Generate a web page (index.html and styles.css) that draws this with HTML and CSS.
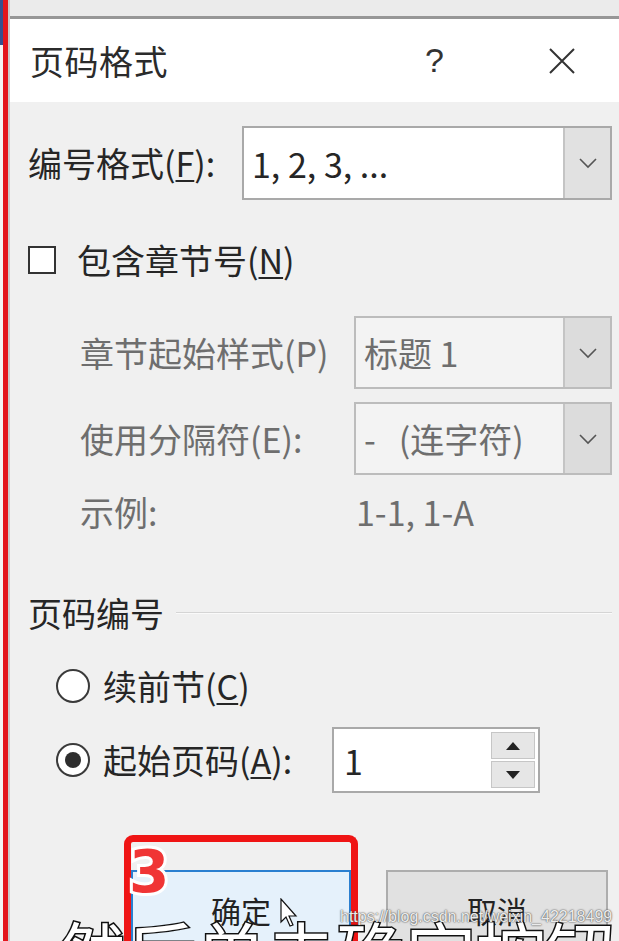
FILE: index.html
```html
<!DOCTYPE html>
<html lang="zh">
  <head>
    <meta charset="UTF-8">
    <title>页码格式</title>
    <link rel="stylesheet" href="styles.css">
  </head>
  <body>
    <div class="screen">
      <div class="edge"></div>
      <div class="marker-line"></div>
      <div class="dialog">
        <div class="top-strip"></div>
        <div class="titlebar">
          <span class="title">页码格式</span>
          <span class="help">?</span>
          <svg class="close" width="28" height="28" viewBox="0 0 28 28">
            <path d="M2 2 L26 26 M26 2 L2 26" stroke="#333" stroke-width="2" fill="none"/>
          </svg>
        </div>

        <div class="dialog-body">
          <div class="row row-format">
            <span class="label label-format">编号格式(<u>F</u>):</span>
            <div class="select select-format">
              <span class="select-value">1, 2, 3, ...</span>
              <span class="select-btn">
                <svg width="20" height="12" viewBox="0 0 20 12"><path d="M2 2 L10 10 L18 2" fill="none" stroke="#555" stroke-width="1.6"/></svg>
              </span>
            </div>
          </div>

          <div class="row row-check">
            <span class="checkbox"></span>
            <span class="label">包含章节号(<u>N</u>)</span>
          </div>

          <div class="row row-chapter">
            <span class="label label-disabled label-chapter">章节起始样式(P)</span>
            <div class="select select-disabled">
              <span class="select-value">标题 1</span>
              <span class="select-btn">
                <svg width="20" height="12" viewBox="0 0 20 12"><path d="M2 2 L10 10 L18 2" fill="none" stroke="#555" stroke-width="1.6"/></svg>
              </span>
            </div>
          </div>

          <div class="row row-sep">
            <span class="label label-disabled label-chapter">使用分隔符(E):</span>
            <div class="select select-disabled">
              <span class="select-value">-&nbsp;&nbsp; (连字符)</span>
              <span class="select-btn">
                <svg width="20" height="12" viewBox="0 0 20 12"><path d="M2 2 L10 10 L18 2" fill="none" stroke="#555" stroke-width="1.6"/></svg>
              </span>
            </div>
          </div>

          <div class="row row-sample">
            <span class="label label-disabled label-chapter">示例:</span>
            <span class="label label-disabled sample-value">1-1, 1-A</span>
          </div>

          <div class="row section-head">
            <span class="label">页码编号</span>
            <span class="section-line"></span>
          </div>

          <div class="row row-radio">
            <span class="radio"></span>
            <span class="label">续前节(<u>C</u>)</span>
          </div>

          <div class="row row-radio row-start">
            <span class="radio radio-on"></span>
            <span class="label label-start">起始页码(<u>A</u>):</span>
            <div class="spinner">
              <span class="spinner-value">1</span>
              <span class="spin-btns">
                <span class="spin-btn"><svg width="14" height="8" viewBox="0 0 14 8"><path d="M7 0 L14 8 L0 8 Z" fill="#222"/></svg></span>
                <span class="spin-btn"><svg width="14" height="8" viewBox="0 0 14 8"><path d="M0 0 L14 0 L7 8 Z" fill="#222"/></svg></span>
              </span>
            </div>
          </div>

          <div class="row row-buttons">
            <div class="annot">
              <span class="annot-num">3</span>
              <div class="btn btn-ok">确定</div>
            </div>
            <div class="btn btn-cancel">取消</div>
          </div>
        </div>
      </div>
    </div>

    <!-- video overlays -->
    <svg class="cursor" width="20" height="30" viewBox="0 0 20 30">
      <path d="M1 1 L1 24 L6 19 L10 28 L13 27 L9 18 L16 18 Z" fill="#fff" stroke="#111" stroke-width="1.2"/>
    </svg>
    <div class="subtitle">然后单击确定按钮</div>
    <div class="watermark">https://blog.csdn.net/weixin_42218499</div>
  </body>
</html>
```

FILE: styles.css
```css
* {
  box-sizing: border-box;
}
html, body {
  margin: 0;
}
body {
  position: relative;
  width: 619px;
  height: 941px;
  overflow: hidden;
  background: #f0f0f0;
  font-family: "Noto Sans CJK SC", "Noto Sans", sans-serif;
  color: #262626;
}
.screen {
  display: flex;
  height: 941px;
}
.edge {
  width: 3px;
  background: linear-gradient(#34508f 0, #34508f 45px, #f4f4f4 45px);
}
.marker-line {
  width: 5px;
  background: #e3161c;
}
.dialog {
  flex: 1;
  display: flex;
  flex-direction: column;
  border-left: 2px solid #cbcbcb;
}
.top-strip {
  flex-shrink: 0;
  height: 19px;
  background: #ebebeb;
  border-bottom: 3px solid #979797;
}
.titlebar {
  flex-shrink: 0;
  display: flex;
  align-items: center;
  height: 83px;
  padding-left: 20px;
  background: #fff;
}
.title {
  font-size: 34px;
  letter-spacing: 0.5px;
  color: #2b2b2b;
}
.help {
  margin-left: auto;
  font-family: "Liberation Sans", sans-serif;
  font-size: 34px;
  color: #333;
}
.close {
  margin-left: 104px;
  margin-right: 43px;
}

.dialog-body {
  flex-shrink: 0;
  padding: 24px 7px 0 18px;
}
.row {
  display: flex;
  align-items: center;
}
.label {
  font-size: 34px;
  line-height: 40px;
  white-space: nowrap;
}
.label u {
  text-underline-offset: 3px;
  text-decoration-thickness: 2px;
}
.label-format {
  width: 214px;
}
.label-disabled {
  color: #6e6e6e;
}
.label-chapter {
  width: 274px;
  margin-left: 52px;
}
.sample-value {
  margin-left: 2px;
}

.select {
  display: flex;
  height: 74px;
  border: 2px solid #a9a9a9;
  background: #fff;
}
.select-format {
  width: 370px;
}
.select-value {
  flex: 1;
  display: flex;
  align-items: center;
  padding-left: 8px;
  font-size: 34px;
}
.select-btn {
  display: flex;
  align-items: center;
  justify-content: center;
  width: 47px;
  background: #e1e1e1;
  border-left: 2px solid #c4c4c4;
}
.select-disabled {
  width: 258px;
  height: 73px;
  border-color: #bcbcbc;
  background: #f3f3f3;
  color: #6e6e6e;
}
.select-disabled .select-btn {
  background: #dcdcdc;
}

.row-check {
  margin-top: 40px;
}
.checkbox {
  width: 28px;
  height: 28px;
  margin-right: 21px;
  border: 2px solid #333;
  background: #fff;
}
.row-chapter {
  margin-top: 36px;
}
.row-sep {
  margin-top: 13px;
}
.row-sample {
  margin-top: 17px;
}
.section-head {
  margin-top: 61px;
}
.section-line {
  flex: 1;
  height: 2px;
  margin-left: 12px;
  border-top: 1px solid #d5d5d5;
  border-bottom: 1px solid #fafafa;
}

.row-radio {
  padding-left: 28px;
  margin-top: 33px;
}
.radio {
  position: relative;
  width: 34px;
  height: 34px;
  margin-right: 13px;
  border: 2px solid #3a3a3a;
  border-radius: 50%;
  background: #fff;
}
.radio-on::after {
  content: "";
  position: absolute;
  left: 7px;
  top: 7px;
  width: 16px;
  height: 16px;
  border-radius: 50%;
  background: #2e2e2e;
}
.row-start {
  margin-top: 21px;
}
.label-start {
  width: 229px;
}
.spinner {
  display: flex;
  width: 208px;
  height: 66px;
  padding: 3px;
  border: 2px solid #a9a9a9;
  background: #fff;
}
.spinner-value {
  flex: 1;
  display: flex;
  align-items: center;
  padding-left: 7px;
  font-size: 34px;
}
.spin-btns {
  display: flex;
  flex-direction: column;
  gap: 2px;
  width: 44px;
}
.spin-btn {
  flex: 1;
  display: flex;
  align-items: center;
  justify-content: center;
  background: #e6e6e6;
  border: 1px solid #c6c6c6;
}

.row-buttons {
  align-items: flex-start;
  margin-top: 42px;
}
.annot {
  position: relative;
  margin-left: 96px;
  padding-top: 28px;
  border: 7px solid #ef1414;
  border-bottom: none;
  border-radius: 9px 9px 0 0;
}
.annot-num {
  position: absolute;
  left: -2px;
  top: -2px;
  font-family: "DejaVu Sans", sans-serif;
  font-weight: bold;
  font-size: 58px;
  line-height: 64px;
  color: #f03535;
  -webkit-text-stroke: 6px #fff;
  paint-order: stroke fill;
}
.btn {
  height: 80px;
  padding-top: 16px;
  text-align: center;
  font-size: 30px;
  color: #222;
}
.btn-ok {
  width: 220px;
  background: #e5f1fb;
  border: 2px solid #2a7fd0;
  border-bottom: none;
}
.btn-cancel {
  width: 222px;
  margin-top: 35px;
  margin-left: 28px;
  background: #e1e1e1;
  border: 2px solid #adadad;
  border-bottom: none;
}

.cursor {
  position: absolute;
  left: 280px;
  top: 898px;
}
.subtitle {
  position: absolute;
  left: 56px;
  top: 912px;
  font-size: 70px;
  line-height: 80px;
  white-space: nowrap;
  color: #fff;
  -webkit-text-stroke: 3px #111;
  paint-order: stroke fill;
}
.watermark {
  position: absolute;
  left: 340px;
  top: 908px;
  font-family: "Liberation Sans", sans-serif;
  font-size: 16px;
  color: rgba(255, 255, 255, 0.9);
  text-shadow: 0 0 2px #555, 0 0 1px #555;
}
```
